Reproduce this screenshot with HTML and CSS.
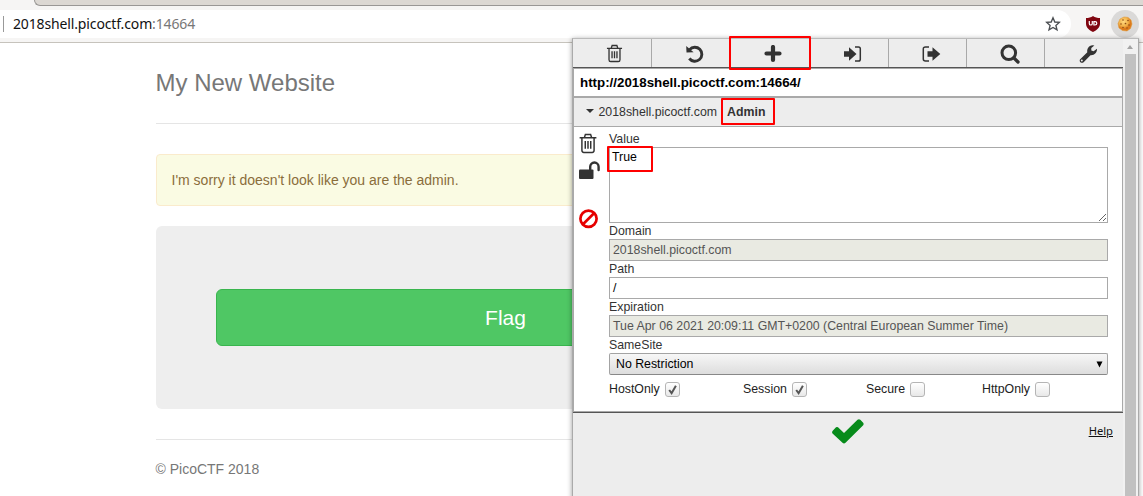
FILE: index.html
```html
<!DOCTYPE html>
<html lang="en">
<head>
<meta charset="utf-8">
<title>My New Website</title>
<link rel="stylesheet" href="styles.css">
</head>
<body>
<header class="browser">
  <div class="tabs"><div class="tab-edge"></div></div>
  <div class="toolbar">
    <div class="address">
      <span class="divider"></span>
      <span class="url">2018shell.picoctf.com<span class="port">:14664</span></span>
      <svg class="star" width="16" height="16" viewBox="0 0 16 16"><path d="M8 1.8 9.8 6 14.3 6.4 10.9 9.4 12 13.9 8 11.5 4 13.9 5.1 9.4 1.7 6.4 6.2 6Z" fill="none" stroke="#4b4e52" stroke-width="1.35"/></svg>
    </div>
    <svg class="shield" width="16" height="18" viewBox="0 0 16 18"><path d="M8 1C6 2.6 3.5 3 1 3V8.500C1 12.500 4 15 8 17 12 15 15 12.500 15 8.500V3C12.500 3 10 2.600 8 1Z" fill="#800610"/><path d="M4.300 6V8.400Q4.300 10 5.800 10T7.300 8.400V6M8.900 6.700H10Q11.800 6.700 11.800 8.300T10 10H8.900Z" fill="none" stroke="#fff" stroke-width="1.200"/></svg>
    <div class="extension">
      <svg width="16" height="16" viewBox="0 0 16 16"><defs><radialGradient id="biscuit" cx=".4" cy=".33"><stop offset="0" stop-color="#ffd880"/><stop offset=".65" stop-color="#f2b34b"/><stop offset="1" stop-color="#dc7a1c"/></radialGradient></defs><path d="M7 1 11 1.400 14 4 15 8 13.500 12.500 10 15 5.500 14.500 2 12 1 7.500 3 3Z" fill="url(#biscuit)" stroke="#df9a3a" stroke-width=".6" stroke-linejoin="round"/><g fill="#8f4a14"><circle cx="6" cy="4" r=".8"/><circle cx="11" cy="4.500" r=".8"/><circle cx="4" cy="8" r=".8"/><circle cx="8.500" cy="7.500" r=".85"/><circle cx="12" cy="9" r=".8"/><circle cx="6" cy="11.500" r=".8"/><circle cx="10" cy="12" r=".7"/></g></svg>
    </div>
  </div>
</header>

<main class="site">
  <h3 class="site-title">My New Website</h3>
  <div class="alert">I'm sorry it doesn't look like you are the admin.</div>
  <div class="jumbotron"><a class="flag">Flag</a></div>
  <footer class="copyright">© PicoCTF 2018</footer>
</main>

<section class="popup">
  <div class="panel">
    <nav class="tools">
      <div class="tool"><svg width="17" height="19" viewBox="0 0 18 20"><use href="#trash"/></svg></div>
      <div class="tool"><svg width="20" height="20" viewBox="0 0 20 20"><path d="M4.600 5.600A7 7 0 1 1 4.300 14.500" fill="none" stroke="#333" stroke-width="2.900"/><path d="M1.200 2 1.500 8.500 8.600 8.300Z" fill="#333"/></svg></div>
      <div class="tool"><svg width="18" height="18" viewBox="0 0 18 18"><path d="M9 2V15M2.500 8.500H15.500" fill="none" stroke="#333" stroke-width="4.200" stroke-linecap="round"/></svg></div>
      <div class="tool"><svg width="19" height="18" viewBox="0 0 19 18"><path d="M1 6.200H6V2.200L13.500 9 6 15.800V11.800H1Z" fill="#333"/><path d="M12 2H15.500Q17.300 2 17.300 3.800V14.200Q17.300 16 15.500 16H12" fill="none" stroke="#333" stroke-width="1.500"/></svg></div>
      <div class="tool"><svg width="19" height="18" viewBox="0 0 19 18"><path d="M5.500 6.200H10.500V2.200L18.300 9 10.500 15.800V11.800H5.500Z" fill="#333"/><path d="M7 2H3.500Q1.300 2 1.300 4V14Q1.300 16 3.500 16H7" fill="none" stroke="#333" stroke-width="1.500"/></svg></div>
      <div class="tool"><svg width="20" height="20" viewBox="0 0 20 20"><circle cx="8.800" cy="8.800" r="6.800" fill="none" stroke="#333" stroke-width="3"/><path d="m14 14 4 4" stroke="#333" stroke-width="3.300" stroke-linecap="round"/></svg></div>
      <div class="tool"><svg width="20" height="20" viewBox="0 0 20 20"><path d="M2.200 15.200 9.300 8.300C8.700 5 10.500 1.500 14.600 1.200L16.400 1.400 13.300 3.900V6.600L15.600 7.300 19 4.800C19.300 8.500 16.500 11.500 12.500 11.200L5.600 18.200C3.500 20 .5 17.300 2.200 15.200Z" fill="#333"/><circle cx="3.800" cy="16.600" r="1" fill="#ededed"/></svg></div>
    </nav>
    <div class="site-url">http://2018shell.picoctf.com:14664/</div>
    <div class="cookie-head"><i class="caret"></i><span class="host">2018shell.picoctf.com</span><b>Admin</b></div>
    <div class="cookie">
      <div class="side">
        <svg width="20" height="21" viewBox="0 0 18 20"><g id="trash" fill="none" stroke="#333" stroke-width="1.400"><path d="M1 4.500H17M5.500 4.500 6.500 1.500H11.500L12.500 4.500M3.200 4.500V16.500Q3.200 18.500 5 18.500H13Q14.800 18.500 14.800 16.500V4.500"/><path d="M6.400 7.700V15M9 7.700V15M11.600 7.700V15"/></g></svg>
        <svg class="lock" width="22" height="20" viewBox="0 0 22 20"><rect x="0" y="8.600" width="14.500" height="9.400" rx="1" fill="#333"/><path d="M11.200 9V5.700A4.200 4.200 0 0 1 19.600 5.700V9" fill="none" stroke="#333" stroke-width="2.400" stroke-linecap="round"/></svg>
        <svg class="ban" width="20" height="20" viewBox="0 0 20 20"><g fill="none" stroke="#e60000" stroke-width="2.700"><circle cx="9.500" cy="9.800" r="8.100"/><path d="m4 15.300 11-11"/></g></svg>
      </div>
      <div class="fields">
        <label>Value</label>
        <textarea class="value">True</textarea>
        <label>Domain</label>
        <div class="field locked">2018shell.picoctf.com</div>
        <label>Path</label>
        <div class="field">/</div>
        <label>Expiration</label>
        <div class="field locked">Tue Apr 06 2021 20:09:11 GMT+0200 (Central European Summer Time)</div>
        <label>SameSite</label>
        <div class="select">No Restriction<svg width="7" height="7" viewBox="0 0 7 7"><path d="M.5 .5H6.500L3.500 6.500Z"/></svg></div>
        <div class="flags">
          <span class="option host-only">HostOnly <i class="box"><svg viewBox="0 0 13 13"><path d="m3.200 7 2.400 3.200L9.900 2.800" /></svg></i></span>
          <span class="option session">Session <i class="box"><svg viewBox="0 0 13 13"><path d="m3.200 7 2.400 3.200L9.900 2.800" /></svg></i></span>
          <span class="option secure">Secure <i class="box"></i></span>
          <span class="option">HttpOnly <i class="box"></i></span>
        </div>
      </div>
    </div>
    <div class="actions">
      <svg width="34" height="28" viewBox="0 0 34 28"><path d="M1.500 14 5 10.300Q6 9.500 7 10.300L13 16 26.500 2.800Q28 1.600 29.300 2.800L32.200 5.700Q33.200 7 32.200 8.300L14.500 25.800Q13 27 11.500 25.800L1.500 16.400Q.5 15.200 1.500 14Z" fill="#078b1b"/></svg>
      <a class="help">Help</a>
    </div>
  </div>
  <div class="scrollbar"><i class="up"></i><div class="thumb"></div></div>
  <div class="mark mark-add"></div>
  <div class="mark mark-name"></div>
  <div class="mark mark-value"></div>
</section>
</body>
</html>
```
FILE: styles.css
```css
* { box-sizing: border-box; }
body { margin: 0; height: 496px; overflow: hidden; position: relative; background: #fff; font-family: "Liberation Sans", Arial, sans-serif; }
svg { display: block; flex: none; }

.browser { height: 43px; background: #f6f5f4; border-bottom: 1px solid #c6c3bc; }
.tabs { height: 10px; padding-left: 34px; }
.tab-edge { height: 6px; background: #dcd8d3; border: solid #999795; border-width: 0 0 1px 1px; border-bottom-left-radius: 6px; }
.toolbar { display: flex; align-items: center; height: 28px; }
.address { width: 1071px; height: 28px; display: flex; align-items: center; background: #fff; border-radius: 0 14px 14px 0; padding-right: 10px; }
.divider { width: 1px; height: 16px; background: #999; margin-left: 3px; }
.url { margin-left: 9px; font: 14px/20px "Noto Sans", sans-serif; color: #111; flex: 1; letter-spacing: -.14px; }
.port { color: #777; }
.shield { margin-left: 14px; }
.extension { width: 28px; height: 28px; border-radius: 50%; background: #dad9d8; margin-left: 10px; display: grid; place-items: center; }

.site { margin-left: 155.5px; width: 700px; color: #777; font-size: 14px; line-height: 20px; }
.site-title { height: 81px; margin: 0 0 30px; padding-top: 20px; font-size: 24px; font-weight: 400; line-height: 40px; border-bottom: 1px solid #e5e5e5; }
.alert { height: 52px; padding: 15px; border: 1px solid #faebcc; border-radius: 4px; background: #fafbe3; color: #8a6d3b; margin-bottom: 20px; }
.jumbotron { height: 183px; background: #eee; border-radius: 6px; padding: 63px 60px; margin-bottom: 30px; }
.flag { display: block; width: 580px; height: 57px; border: 1px solid #39b54e; border-radius: 6px; background: #4fc764; color: #fff; font-size: 21px; line-height: 55px; text-align: center; }
.copyright { border-top: 1px solid #e5e5e5; padding-top: 19px; }

.popup { position: absolute; left: 572px; top: 38px; width: 567px; height: 470px; display: flex; border: 1px solid #aaa; border-top-color: #bbb; background: #ededed; box-shadow: 0 1px 5px rgba(0,0,0,.4); font-size: 12.33px; color: #333; }
.panel { width: 550px; }
.tools { height: 29px; display: grid; grid-template-columns: 79px 79px 80px repeat(4, 78px); border-bottom: 1px solid #555; }
.tool { display: grid; place-items: center; padding: 1px 0 0 5px; border-right: 1px solid #a9a9a9; }
.tool:nth-child(2) { padding-left: 7px; }
.tool:nth-child(3) { padding-left: 4px; }
.tool:nth-child(6) { padding-left: 8px; }
.tool:nth-child(5) { padding-left: 7px; }
.tool:last-child { border: 0; padding-left: 7px; }
.site-url { height: 29px; padding: 0 6px; border: 1px solid #a9a9a9; background: #fff; color: #000; font-size: 13.33px; font-weight: 700; line-height: 27px; }
.cookie-head { height: 30px; display: flex; align-items: center; padding-left: 12px; border: 1px solid #a9a9a9; }
.caret { border: 4px solid transparent; border-top-color: #333; border-bottom: 0; margin: -2px 4.5px 0 0; }
.host { margin-right: 10px; }
.cookie { height: 285px; display: flex; background: #fff; border: solid #a9a9a9; border-width: 0 1px 1px; }
.side { width: 35px; padding: 6px 0 0 4px; }
.lock { margin: 7px 0 0 1px; }
.ban { margin: 28px 0 0 1px; }
.fields { width: 499px; padding-top: 4px; }
.fields label { display: block; height: 16px; line-height: 16px; }
.value { display: block; width: 499px; height: 76px; padding: 2px; border: 1px solid #a9a9a9; border-radius: 0; outline: 0; background: #fff; color: #000; font: 12.33px/14px "Liberation Sans", sans-serif; resize: vertical; }
.field { height: 22px; padding: 0 3px; border: 1px solid #a9a9a9; line-height: 20px; color: #000; }
.locked { background: #e9eae2; color: #555; }
.select { height: 22px; display: flex; justify-content: space-between; align-items: center; padding: 0 4px 0 6px; border: 1px solid #a3a3a3; border-bottom-color: #888; border-radius: 2px; background: linear-gradient(#f7f7f7, #ddd); color: #000; }
.flags { display: flex; height: 27px; align-items: center; color: #222; }
.option { display: flex; align-items: center; gap: 5px; }
.host-only { width: 134px; }
.session { width: 123px; }
.secure { width: 116px; }
.box { width: 15px; height: 15px; margin-top: 1px; border: 1px solid #b5b5b5; border-radius: 3px; background: linear-gradient(#fff, #e8e8e8); }
.box path { fill: none; stroke: #555; stroke-width: 2; }
.actions { height: 100px; border-top: 1px solid #555; display: flex; align-items: flex-start; padding: 4px 10px 0 258px; justify-content: space-between; }
.help { font: 11.2px/16px "Noto Sans", sans-serif; color: #111; text-decoration: underline; margin-top: 6px; }
.scrollbar { width: 15px; background: #f1f1f1; padding: 6px 2px 0; }
.up { display: block; width: 0; border: 3.5px solid transparent; border-top: 0; border-bottom: 4px solid #a3a3a3; margin: 0 0 5px 2px; }
.thumb { height: 450px; background: #c1c1c1; }
.mark { position: absolute; border: 2px solid #f00; border-radius: 1px; }
.mark-add { left: 156px; top: -3px; width: 82px; height: 34px; }
.mark-name { left: 148px; top: 59px; width: 54px; height: 27px; }
.mark-value { left: 34px; top: 107px; width: 46px; height: 26px; }
```
